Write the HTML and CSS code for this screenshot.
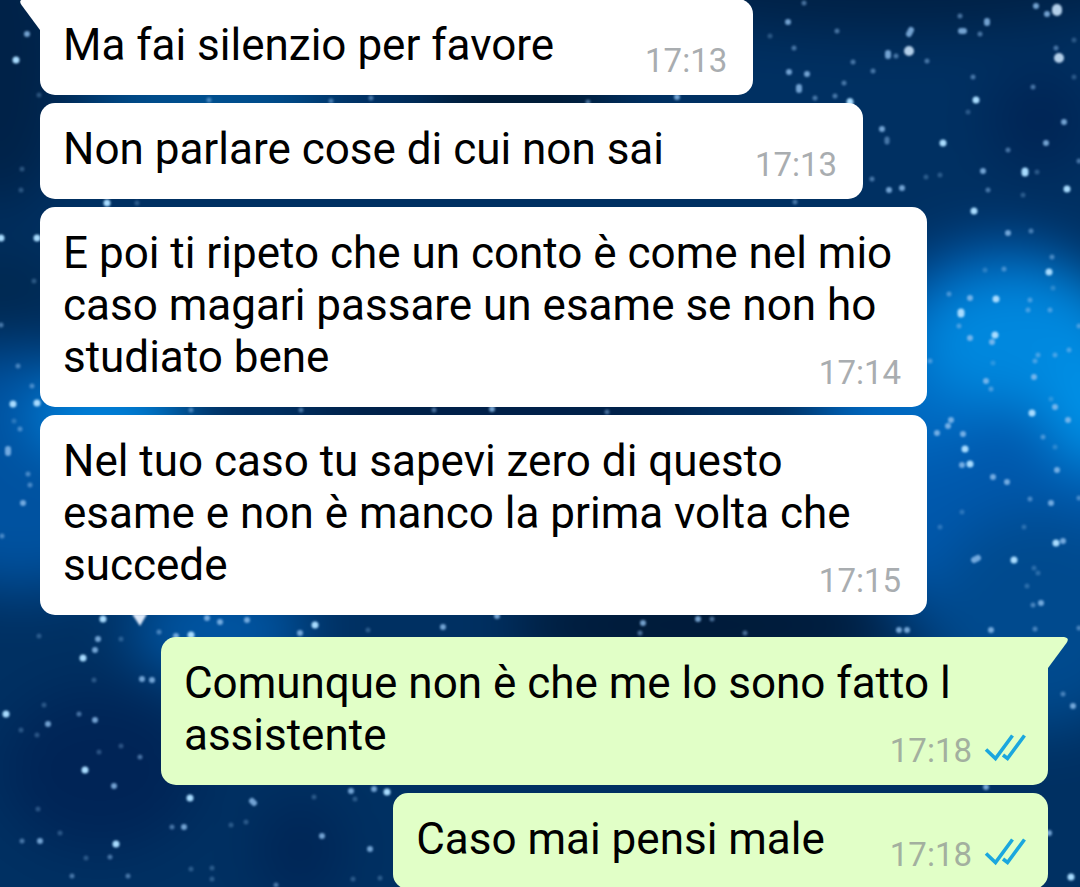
FILE: index.html
```html
<!DOCTYPE html>
<html lang="it">
<head>
<meta charset="utf-8">
<meta name="viewport" content="width=device-width, initial-scale=1">
<title>Chat</title>
<link rel="stylesheet" href="styles.css">
</head>
<body>
<svg class="wallpaper" viewBox="0 0 1080 887" preserveAspectRatio="xMidYMid slice" aria-hidden="true">
  <defs>
    <filter id="haze" x="-200" y="-200" width="1480" height="1287" filterUnits="userSpaceOnUse" color-interpolation-filters="sRGB"><feGaussianBlur stdDeviation="28"/></filter>
    <filter id="soft" x="0" y="0" width="1080" height="887" filterUnits="userSpaceOnUse" color-interpolation-filters="sRGB"><feGaussianBlur stdDeviation="1.1"/></filter>
  </defs>
  <rect width="1080" height="887" fill="#003060"/>
  <g filter="url(#haze)">
    <rect x="-200" y="-200" width="1480" height="1287" fill="#003062"/>
    <ellipse cx="0" cy="60" rx="70" ry="150" fill="#002248"/>
    <ellipse cx="890" cy="-30" rx="280" ry="60" fill="#002044"/>
    <ellipse cx="1040" cy="120" rx="50" ry="50" fill="#002454"/>
    <ellipse cx="210" cy="100" rx="120" ry="40" fill="#005496"/>
    <ellipse cx="520" cy="100" rx="100" ry="40" fill="#001830"/>
    <ellipse cx="0" cy="290" rx="70" ry="40" fill="#002850"/>
    <ellipse cx="20" cy="470" rx="140" ry="120" fill="#0052a0"/>
    <ellipse cx="110" cy="415" rx="80" ry="40" fill="#0088e4"/>
    <ellipse cx="500" cy="410" rx="200" ry="60" fill="#002048"/>
    <ellipse cx="1000" cy="440" rx="160" ry="200" fill="#0058ac"/>
    <ellipse cx="900" cy="410" rx="90" ry="50" fill="#0068c0"/>
    <ellipse cx="1020" cy="340" rx="110" ry="70" fill="#0088de"/>
    <ellipse cx="1095" cy="410" rx="50" ry="60" fill="#0092e8"/>
    <ellipse cx="1040" cy="620" rx="110" ry="110" fill="#004a8e"/>
    <ellipse cx="220" cy="630" rx="90" ry="50" fill="#0056a4"/>
    <ellipse cx="700" cy="625" rx="190" ry="50" fill="#001a38"/>
    <ellipse cx="100" cy="770" rx="100" ry="80" fill="#002456"/>
    <ellipse cx="300" cy="850" rx="40" ry="50" fill="#002454"/>
  </g>
  <g class="stars" filter="url(#soft)">
    <path class="star-faint" d="M39 95h0M22 169h0M21 190h0M137 203h0M770 36h0M968 112h0M1037 172h0M1023 195h0M926 177h0M940 175h0M1053 288h0M985 270h0M993 363h0M1051 399h0M1055 447h0M1034 568h0M1038 573h0M1027 586h0M940 527h0M1024 527h0M962 512h0M121 639h0M39 636h0M94 680h0M21 730h0M37 735h0M44 705h0M121 746h0M60 833h0M86 858h0M38 809h0M231 825h0M246 822h0M355 799h0M314 797h0M212 868h0M353 879h0M380 878h0M34 281h0M14 421h0M368 630h0M1074 77h0M1074 40h0M99 752h0M191 869h0M212 879h0"/>
    <path class="star-small" d="M209 100h0M331 101h0M371 98h0M588 102h0M191 410h0M301 410h0M434 410h0M607 412h0M712 619h0M745 633h0M837 31h0M794 48h0M804 3h0M815 98h0M835 96h0M844 83h0M853 62h0M873 71h0M896 56h0M927 61h0M960 16h0M980 34h0M1056 48h0M1033 87h0M973 77h0M1008 150h0M1079 161h0M887 139v3M988 190h0M872 179h0M795 202h0M1031 231h0M1052 257h0M1004 269h0M949 294h0M959 326h0M1030 300h0M1028 310h0M1050 310h0M1079 326h0M930 361h0M991 389h0M1038 355h0M1035 361h0M1055 355h0M1069 350h0M1043 437h0M1030 499h0M1079 498h0M1033 605h0M1035 629h0M1079 628h0M159 632h0M79 714h0M140 757h0M22 841h0M110 857h0M72 876h0M128 876h0M172 827h0M276 885h0M1063 694h0M1 325h0M18 366h0M32 386h0M20 429h0M28 474h0M30 485h0M2 536h0M640 633h0"/>
    <path class="star-medium" d="M27 34h0M677 97h0M492 409h0M698 619h0M788 22h0M789 72h0M807 74h0M799 87v3M850 101h0M888 53v3M911 30l-2 4M961 31h3M987 21v2M1036 6h0M1047 14h0M1064 122h0M1046 143h0M882 129h0M983 171h0M889 190h0M902 188h0M1008 233h0M970 298h0M970 338h0M992 342h0M986 381h0M1034 377h0M1055 407h0M951 420h0M948 426h0M937 433h0M963 434h0M962 465h0M993 477h0M1007 482h0M1068 420h0M1057 470h0M1051 503h0M1063 541h0M974 560l4-2M1041 603h0M991 630h0M899 630h0M907 630h0M98 639h0M95 650h0M142 679h0M152 680h0M48 724h0M95 720h0M114 786h0M40 841h0M252 801l2 2M184 827h0M322 836h0M370 849h0M351 791h0M374 789h0M1073 706h0M986 787h0M1049 833h0M8 449v4M23 503h0M207 618h0M220 622h0M247 620h0M176 636h0M300 633h0M443 627h0M497 616h0M643 623h0"/>
    <path class="star-large" d="M16 60h0M107 203h0M976 100h0M943 143h0M1025 171v2M1067 189h0M974 211h0M1049 272h0M996 299h0M961 312v2M995 335h0M1032 413h0M965 449h0M970 464h0M1056 543h0M1014 560h0M103 619h0M83 658h0M6 714h0M85 770h0M387 792h0M1071 877h0M1 238h0M37 238h0M13 404h0M37 403h0M315 625h0M191 635h0M850 102h0M116 844h0M190 798h0"/>
    <path class="star-giant" d="M909 51h0M1057 9v2M1059 58h0"/>
    <path class="flare" d="M132 614h15l-7 12z"/>
  </g>
</svg>

<svg class="symbols" aria-hidden="true">
  <symbol id="read" viewBox="0 0 42 28">
    <path d="M2 15.500l9.500 9L28.500 1.500M19 21l4.500 3.500L40.500 1.500" fill="none" stroke="#1ba7de" stroke-width="3.600"/>
  </symbol>
  <symbol id="tail" viewBox="0 0 20 31">
    <path d="M0 0h16q6 1 2.500 6L0 31z" fill="currentColor"/>
  </symbol>
</svg>

<main class="chat">
  <section class="group incoming">
    <article class="bubble">
      <svg class="tail" aria-hidden="true"><use href="#tail"/></svg>
      <span class="text">Ma fai silenzio per favore</span><span class="meta"><time>17:13</time></span>
    </article>
    <article class="bubble">
      <span class="text">Non parlare cose di cui non sai</span><span class="meta"><time>17:13</time></span>
    </article>
    <article class="bubble">
      <span class="text">E poi ti ripeto che un conto è come nel mio caso magari passare un esame se non ho studiato bene</span><span class="meta"><time>17:14</time></span>
    </article>
    <article class="bubble">
      <span class="text">Nel tuo caso tu sapevi zero di questo esame e non è manco la prima volta che succede</span><span class="meta"><time>17:15</time></span>
    </article>
  </section>
  <section class="group outgoing">
    <article class="bubble">
      <svg class="tail" aria-hidden="true"><use href="#tail"/></svg>
      <span class="text">Comunque non è che me lo sono fatto l assistente</span><span class="meta"><time>17:18</time><svg class="ticks" role="img" aria-label="Letto"><use href="#read"/></svg></span>
    </article>
    <article class="bubble">
      <span class="text">Caso mai pensi male</span><span class="meta"><time>17:18</time><svg class="ticks" role="img" aria-label="Letto"><use href="#read"/></svg></span>
    </article>
  </section>
</main>
</body>
</html>
```
FILE: styles.css
```css
* {
  box-sizing: border-box;
}

body {
  margin: 0;
  height: 100vh;
  overflow: hidden;
  background: #003060;
  font-family: Roboto, "Liberation Sans", sans-serif;
}

.wallpaper {
  position: absolute;
  inset: 0;
  width: 100%;
  height: 100%;
}

.stars {
  fill: none;
  stroke: #90c0f0;
  stroke-linecap: round;
}

.star-faint {
  stroke-width: 5px;
  opacity: 0.3;
}

.star-small {
  stroke-width: 5px;
  opacity: 0.5;
}

.star-medium {
  stroke-width: 6px;
  opacity: 0.8;
}

.star-large {
  stroke: #a8dcff;
  stroke-width: 7px;
}

.star-giant {
  stroke: #b4d0ea;
  stroke-width: 10px;
}

.flare {
  fill: #dce8f8;
  stroke: none;
}

.symbols {
  position: absolute;
  width: 0;
  height: 0;
}

.chat {
  position: relative;
  display: flex;
  flex-direction: column;
  gap: 22px;
  margin-top: -1px;
  padding: 0 32px 0 40px;
}

.group {
  display: flex;
  flex-direction: column;
  gap: 8px;
}

.incoming {
  align-items: flex-start;
  color: #fff;
}

.outgoing {
  align-items: flex-end;
  color: #e1ffc7;
}

.bubble {
  position: relative;
  max-width: 88%;
  padding: 20px 26px 24px 23px;
  border-radius: 15px;
  background: currentColor;
  font-size: 44px;
  line-height: 52px;
}

.outgoing .bubble {
  padding-right: 22px;
}

.incoming .bubble:first-child {
  border-top-left-radius: 0;
}

.outgoing .bubble:first-child {
  border-top-right-radius: 0;
}

.text {
  color: #000;
}

/* Sits beside the last line, slightly below its baseline */
.meta {
  float: right;
  display: flex;
  align-items: center;
  gap: 12px;
  margin: 22px 0 -10px 91px;
  color: #a9adb0;
  font-size: 33px;
  line-height: 40px;
}

.outgoing .meta {
  margin-left: 65px;
  color: #a3b09f;
}

.ticks {
  width: 42px;
  height: 28px;
  margin-bottom: 6px;
}

.tail {
  position: absolute;
  top: 0;
  left: 100%;
  width: 20px;
  height: 31px;
}

.incoming .tail {
  right: 100%;
  left: auto;
  transform: scaleX(-1);
}
```
